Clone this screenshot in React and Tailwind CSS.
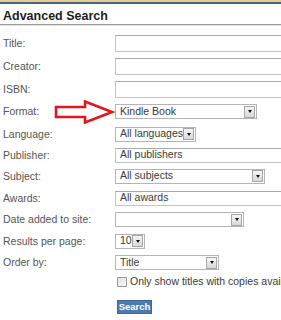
import React from "react";

const font = { fontFamily: '"Liberation Sans", Arial, sans-serif' };

function Label({ children }) {
  return (
    <div className="w-[115px] shrink-0 pl-[3px] text-[10.5px] leading-[13px] text-[#555]">
      {children}
    </div>
  );
}

function TextBox({ value, h = "h-[17px]" }) {
  return (
    <div
      className={`${h} w-[190px] shrink-0 border border-[#c4c4c4] border-t-[#aaaaaa] bg-white flex items-center pl-[4px] text-[10.5px] text-[#3a3a3a] whitespace-nowrap`}
    >
      {value}
    </div>
  );
}

function DropBtn() {
  return (
    <div className="ml-auto mr-[1px] h-[12px] w-[11px] shrink-0 border border-[#a6a6a6] bg-gradient-to-b from-[#f4f4f4] to-[#d9d9d9] flex items-center justify-center">
      <div className="h-0 w-0 border-l-[2.5px] border-r-[2.5px] border-t-[3px] border-l-transparent border-r-transparent border-t-[#111]" />
    </div>
  );
}

function Select({ value, w }) {
  return (
    <div
      className={`h-[15px] ${w} shrink-0 border border-[#b5b5b5] bg-white flex items-center pl-[4px] text-[10.5px] text-[#3a3a3a] whitespace-nowrap`}
    >
      <span>{value}</span>
      <DropBtn />
    </div>
  );
}

function Row({ h, label, children, extra }) {
  return (
    <div className={`relative flex items-center ${h}`}>
      <Label>{label}</Label>
      {children}
      {extra}
    </div>
  );
}

export default function App() {
  return (
    <div className="w-[281px] h-[320px] overflow-hidden bg-white" style={font}>
      <div className="h-[2px] bg-[#ecca8c]" />
      <div className="h-[2px] bg-[#3f6592]" />
      <div className="h-[21px] border-b border-[#9a9a9a] pl-[3px] pt-[5px] text-[12.5px] leading-[14px] font-bold text-[#1e1e1e]">
        Advanced Search
      </div>
      <div className="h-[1px] bg-[#e4e4e4]" />
      <div className="mt-[5px] flex flex-col">
        <Row h="h-[24px]" label="Title:">
          <TextBox value="" />
        </Row>
        <Row h="h-[23px]" label="Creator:">
          <TextBox value="" />
        </Row>
        <Row h="h-[22px]" label="ISBN:">
          <TextBox value="" />
        </Row>
        <Row
          h="h-[23px]"
          label="Format:"
          extra={
            <svg
              className="absolute left-[54px] top-0"
              width="62"
              height="24"
              viewBox="0 0 62 24"
            >
              <polygon
                points="2,7 31,7 31,1.5 58,12 31,22.5 31,17 2,17"
                fill="#fff"
                stroke="#e3161b"
                strokeWidth="2.6"
                strokeLinejoin="miter"
              />
            </svg>
          }
        >
          <Select value="Kindle Book" w="w-[142px]" />
        </Row>
        <Row h="h-[22px]" label="Language:">
          <Select value="All languages" w="w-[81px]" />
        </Row>
        <Row h="h-[20px]" label="Publisher:">
          <TextBox value="All publishers" h="h-[15px]" />
        </Row>
        <Row h="h-[22px]" label="Subject:">
          <Select value="All subjects" w="w-[150px]" />
        </Row>
        <Row h="h-[22px]" label="Awards:">
          <TextBox value="All awards" h="h-[15px]" />
        </Row>
        <Row h="h-[21px]" label="Date added to site:">
          <Select value="" w="w-[129px]" />
        </Row>
        <Row h="h-[22px]" label="Results per page:">
          <Select value="10" w="w-[30px]" />
        </Row>
        <Row h="h-[21px]" label="Order by:">
          <Select value="Title" w="w-[104px]" />
        </Row>
        <div className="flex h-[18px] items-center overflow-hidden pl-[117px]">
          <div className="h-[10px] w-[10px] shrink-0 border border-[#9c9c9c] bg-gradient-to-br from-[#e2e2e2] to-[#f8f8f8]" />
          <span className="ml-[3px] whitespace-nowrap text-[10.5px] text-[#3a3a3a]">
            Only show titles with copies available
          </span>
        </div>
        <div className="mt-[9px] pl-[117px]">
          <div className="flex h-[14px] w-[35px] items-center justify-center border border-[#3d6897] bg-[#4b7bb2] text-[9.5px] font-bold leading-none text-white">
            Search
          </div>
        </div>
      </div>
    </div>
  );
}
